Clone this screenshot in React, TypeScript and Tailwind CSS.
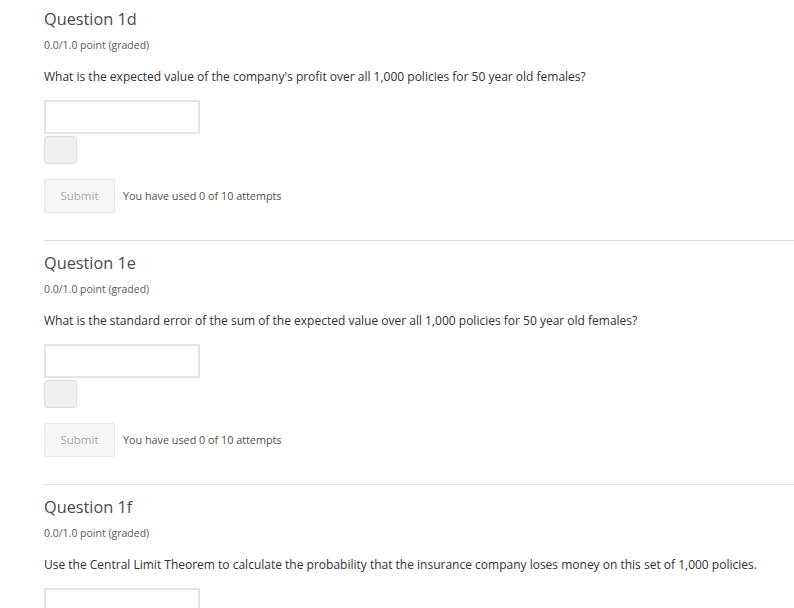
const questions = [
  {
    id: "1d",
    prompt: "What is the expected value of the company's profit over all 1,000 policies for 50 year old females?",
  },
  {
    id: "1e",
    prompt: "What is the standard error of the sum of the expected value over all 1,000 policies for 50 year old females?",
  },
  {
    id: "1f",
    prompt: "Use the Central Limit Theorem to calculate the probability that the insurance company loses money on this set of 1,000 policies.",
  },
];

function Problem({ id, prompt, first }: { id: string; prompt: string; first: boolean }) {
  return (
    <section className={`border-b border-[#dddddd] pb-[27px] ${first ? "pt-[7px]" : "pt-[10px]"}`}>
      <h3 className="text-[16.3px] leading-[24px] font-normal text-[#4a4a4a]">Question {id}</h3>
      <div className="mt-[6px] text-[10.5px] leading-[16px] text-[#5a5a5a]">0.0/1.0 point (graded)</div>
      <p className="mt-[15px] text-[12px] leading-[18px] text-[#313131]">{prompt}</p>
      <input
        type="text"
        className="mt-[14px] block h-[34px] w-[156px] border-2 border-[#e4e4e4] bg-white outline-none"
      />
      <div className="mt-[2px] h-[28px] w-[33px] rounded-[3px] border border-[#dedede] bg-[#f0f0f0]" />
      <div className="mt-[15px] flex items-center gap-[8px]">
        <button
          type="button"
          className="h-[34px] w-[71px] rounded-[2px] border border-[#e6e6e6] bg-[#f6f6f6] text-[11.5px] text-[#aaaaaa]"
        >
          Submit
        </button>
        <span className="text-[10.8px] text-[#4f4f4f]">You have used 0 of 10 attempts</span>
      </div>
    </section>
  );
}

export default function App() {
  return (
    <div className="h-[608px] w-[794px] overflow-hidden bg-white pl-[44px] font-['Open_Sans',sans-serif]">
      {questions.map((q, i) => (
        <Problem key={q.id} id={q.id} prompt={q.prompt} first={i === 0} />
      ))}
    </div>
  );
}
